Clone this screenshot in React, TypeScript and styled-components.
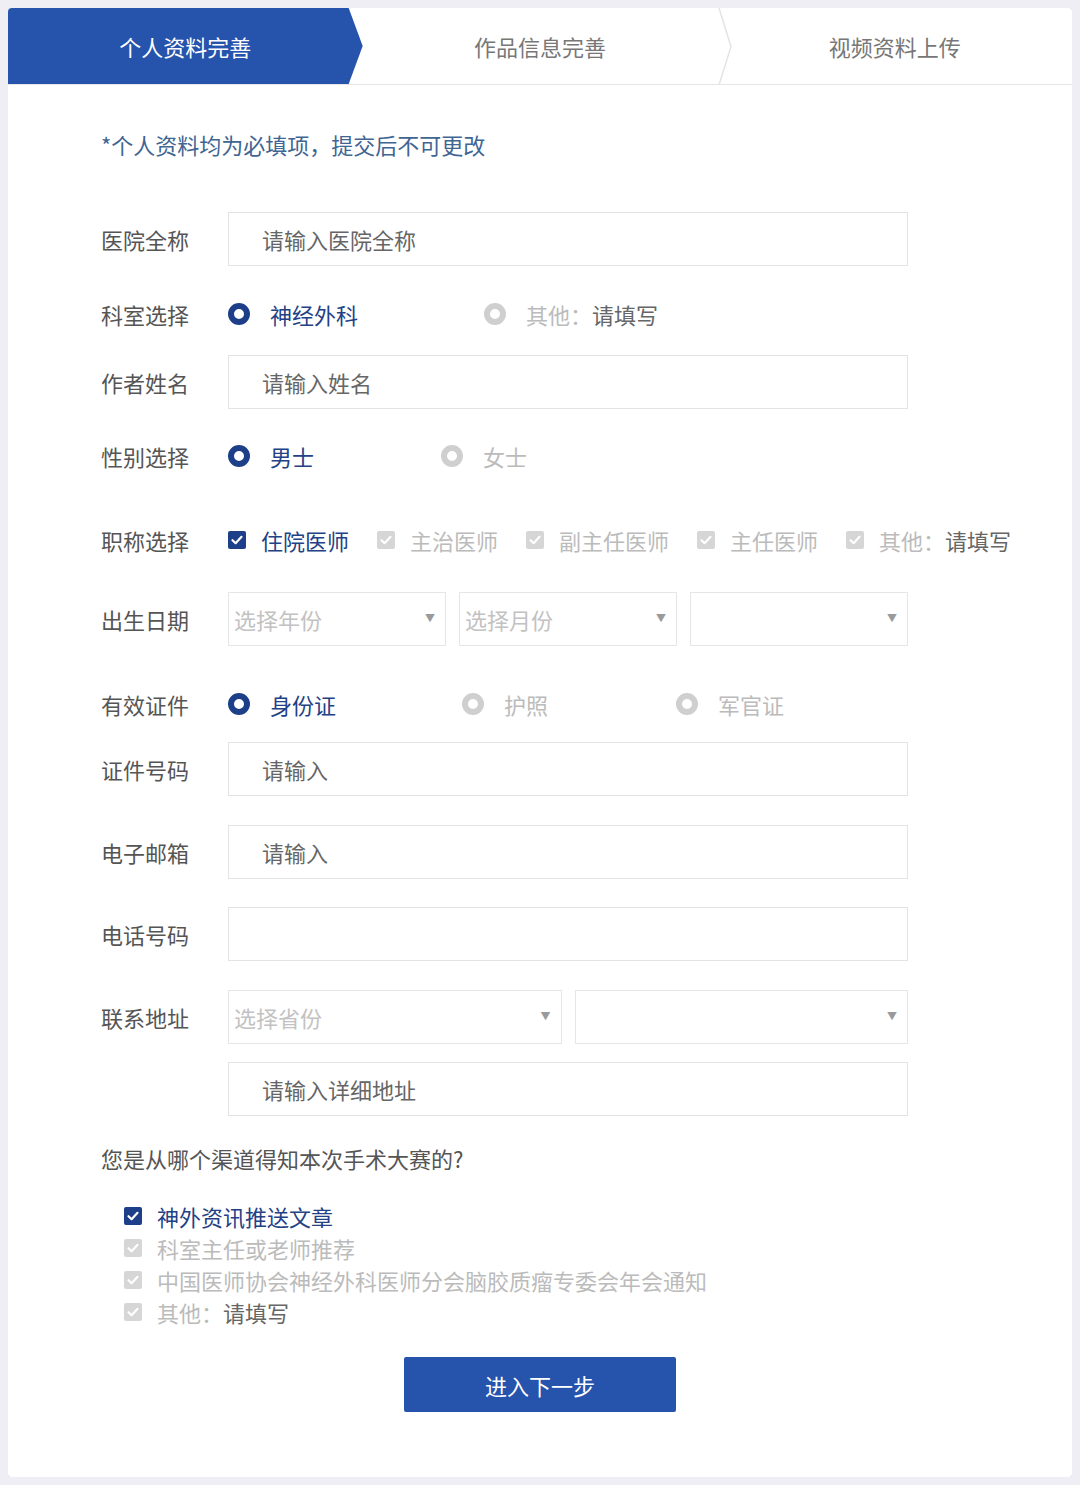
import styled, { createGlobalStyle } from 'styled-components'

const GlobalStyle = createGlobalStyle`
  html, body {
    background: #eeeef4;
  }
  body {
    margin: 8px;
    font-family: "Noto Sans CJK SC", "Noto Sans", sans-serif;
  }
  * {
    box-sizing: border-box;
  }
`

const BLUE = '#2653ac'
const NAVY = '#1d3f8a'

const Card = styled.div`
  background: #fff;
  border-radius: 4px;
  box-shadow: 0 1px 6px rgba(120, 120, 160, 0.18);
  overflow: hidden;
  padding-bottom: 65px;
`

const TabBar = styled.div`
  display: flex;
  height: 77px;
  border-bottom: 1px solid #e6e6e6;
`

const Tab = styled.div<{ $active?: boolean; $sep?: boolean }>`
  position: relative;
  flex: 1;
  display: flex;
  align-items: center;
  justify-content: center;
  font-size: 22px;
  color: ${p => (p.$active ? '#fff' : '#777')};
  background: ${p => (p.$active ? BLUE : 'transparent')};
  clip-path: ${p =>
    p.$active
      ? 'polygon(0 0, calc(100% - 14px) 0, 100% 50%, calc(100% - 14px) 100%, 0 100%)'
      : 'none'};
`

const Chevron = styled.svg`
  position: absolute;
  right: -15px;
  top: 0;
  width: 14px;
  height: 77px;
`

const Body = styled.div`
  padding: 44px 0 0 93px;
`

const Note = styled.div`
  font-size: 22px;
  line-height: 30px;
  color: #3f6592;
`

const Row = styled.div<{ $mt: number }>`
  display: grid;
  grid-template-columns: 127px 680px;
  align-items: center;
  min-height: 54px;
  margin-top: ${p => p.$mt}px;
`

const Label = styled.div`
  font-size: 22px;
  color: #555;
`

const Input = styled.div`
  height: 54px;
  border: 1px solid #e3e3e3;
  display: flex;
  align-items: center;
  padding-left: 33px;
  font-size: 22px;
  color: #666;
`

const Options = styled.div`
  display: flex;
  align-items: center;
  white-space: nowrap;
`

const RadioOption = styled.div<{ $w?: number }>`
  display: flex;
  align-items: center;
  width: ${p => (p.$w ? `${p.$w}px` : 'auto')};
  font-size: 22px;
`

const RadioDot = styled.span<{ $on?: boolean }>`
  width: 22px;
  height: 22px;
  border-radius: 50%;
  border: 6px solid ${p => (p.$on ? NAVY : '#cfcfcf')};
  margin-right: 20px;
  flex-shrink: 0;
`

const OptText = styled.span<{ $on?: boolean }>`
  color: ${p => (p.$on ? '#234185' : '#bbb')};
`

const Fill = styled.span`
  color: #666;
`

const CheckOption = styled.div`
  display: flex;
  align-items: center;
  font-size: 22px;
  margin-right: 28px;
  &:last-child {
    margin-right: 0;
  }
`

const Box = styled.span<{ $on?: boolean }>`
  width: 18px;
  height: 18px;
  border-radius: 2px;
  background: ${p => (p.$on ? NAVY : '#d6d6d6')};
  margin-right: 15px;
  display: flex;
  align-items: center;
  justify-content: center;
  flex-shrink: 0;
`

const SelectRow = styled.div<{ $cols: number }>`
  display: grid;
  grid-template-columns: repeat(${p => p.$cols}, 1fr);
  column-gap: 13px;
`

const Select = styled.div`
  height: 54px;
  border: 1px solid #e6e6e6;
  display: flex;
  align-items: center;
  justify-content: space-between;
  padding: 0 10px 0 5px;
  font-size: 22px;
  color: #c2c2c2;
`

const Caret = styled.span`
  font-size: 10px;
  color: #9a9a9a;
  margin-top: -4px;
`

const Question = styled.div`
  margin-top: 27px;
  font-size: 22px;
  line-height: 30px;
  color: #555;
`

const SourceList = styled.div`
  margin: 27px 0 0 23px;
  display: flex;
  flex-direction: column;
`

const SourceItem = styled.div`
  display: flex;
  align-items: center;
  height: 32px;
  font-size: 22px;
`

const Footer = styled.div`
  display: flex;
  justify-content: center;
  margin-top: 29px;
`

const NextButton = styled.button`
  width: 272px;
  height: 55px;
  border: none;
  border-radius: 2px;
  background: ${BLUE};
  color: #fff;
  font-family: inherit;
  font-size: 22px;
`

const Check = ({ on }: { on?: boolean }) => (
  <Box $on={on}>
    <svg width="14" height="14" viewBox="0 0 14 14">
      <path d="M2.5 7.2 L5.6 10.2 L11.5 3.8" fill="none" stroke="#fff" strokeWidth="2.2" strokeLinecap="round" strokeLinejoin="round" />
    </svg>
  </Box>
)

const Radio = ({ on, w, children }: { on?: boolean; w?: number; children: React.ReactNode }) => (
  <RadioOption $w={w}>
    <RadioDot $on={on} />
    <OptText $on={on}>{children}</OptText>
  </RadioOption>
)

const DropDown = ({ text }: { text?: string }) => (
  <Select>
    <span>{text}</span>
    <Caret>▼</Caret>
  </Select>
)

const titles = ['住院医师', '主治医师', '副主任医师', '主任医师']
const sources = ['神外资讯推送文章', '科室主任或老师推荐', '中国医师协会神经外科医师分会脑胶质瘤专委会年会通知']

const App = () => {
  return (
    <>
      <GlobalStyle />
      <Card>
        <TabBar>
          <Tab $active>个人资料完善</Tab>
          <Tab>
            作品信息完善
            <Chevron viewBox="0 0 14 77">
              <polyline points="1,0 13,38.5 1,77" fill="none" stroke="#e4e4e4" strokeWidth="1.5" />
            </Chevron>
          </Tab>
          <Tab>视频资料上传</Tab>
        </TabBar>

        <Body>
          <Note>*个人资料均为必填项，提交后不可更改</Note>

          <Row $mt={53}>
            <Label>医院全称</Label>
            <Input>请输入医院全称</Input>
          </Row>

          <Row $mt={21}>
            <Label>科室选择</Label>
            <Options>
              <Radio on w={256}>神经外科</Radio>
              <Radio>
                其他：<Fill>请填写</Fill>
              </Radio>
            </Options>
          </Row>

          <Row $mt={14}>
            <Label>作者姓名</Label>
            <Input>请输入姓名</Input>
          </Row>

          <Row $mt={20}>
            <Label>性别选择</Label>
            <Options>
              <Radio on w={213}>男士</Radio>
              <Radio>女士</Radio>
            </Options>
          </Row>

          <Row $mt={30}>
            <Label>职称选择</Label>
            <Options>
              {titles.map((t, i) => (
                <CheckOption key={t}>
                  <Check on={i === 0} />
                  <OptText $on={i === 0}>{t}</OptText>
                </CheckOption>
              ))}
              <CheckOption>
                <Check />
                <OptText>其他：</OptText>
                <Fill>请填写</Fill>
              </CheckOption>
            </Options>
          </Row>

          <Row $mt={25}>
            <Label>出生日期</Label>
            <SelectRow $cols={3}>
              <DropDown text="选择年份" />
              <DropDown text="选择月份" />
              <DropDown />
            </SelectRow>
          </Row>

          <Row $mt={31}>
            <Label>有效证件</Label>
            <Options>
              <Radio on w={234}>身份证</Radio>
              <Radio w={214}>护照</Radio>
              <Radio>军官证</Radio>
            </Options>
          </Row>

          <Row $mt={11}>
            <Label>证件号码</Label>
            <Input>请输入</Input>
          </Row>

          <Row $mt={29}>
            <Label>电子邮箱</Label>
            <Input>请输入</Input>
          </Row>

          <Row $mt={28}>
            <Label>电话号码</Label>
            <Input />
          </Row>

          <Row $mt={29}>
            <Label>联系地址</Label>
            <SelectRow $cols={2}>
              <DropDown text="选择省份" />
              <DropDown />
            </SelectRow>
          </Row>

          <Row $mt={18}>
            <span />
            <Input>请输入详细地址</Input>
          </Row>

          <Question>您是从哪个渠道得知本次手术大赛的?</Question>

          <SourceList>
            {sources.map((s, i) => (
              <SourceItem key={s}>
                <Check on={i === 0} />
                <OptText $on={i === 0}>{s}</OptText>
              </SourceItem>
            ))}
            <SourceItem>
              <Check />
              <OptText>其他：</OptText>
              <Fill>请填写</Fill>
            </SourceItem>
          </SourceList>
        </Body>

        <Footer>
          <NextButton>进入下一步</NextButton>
        </Footer>
      </Card>
    </>
  )
}

export default App
